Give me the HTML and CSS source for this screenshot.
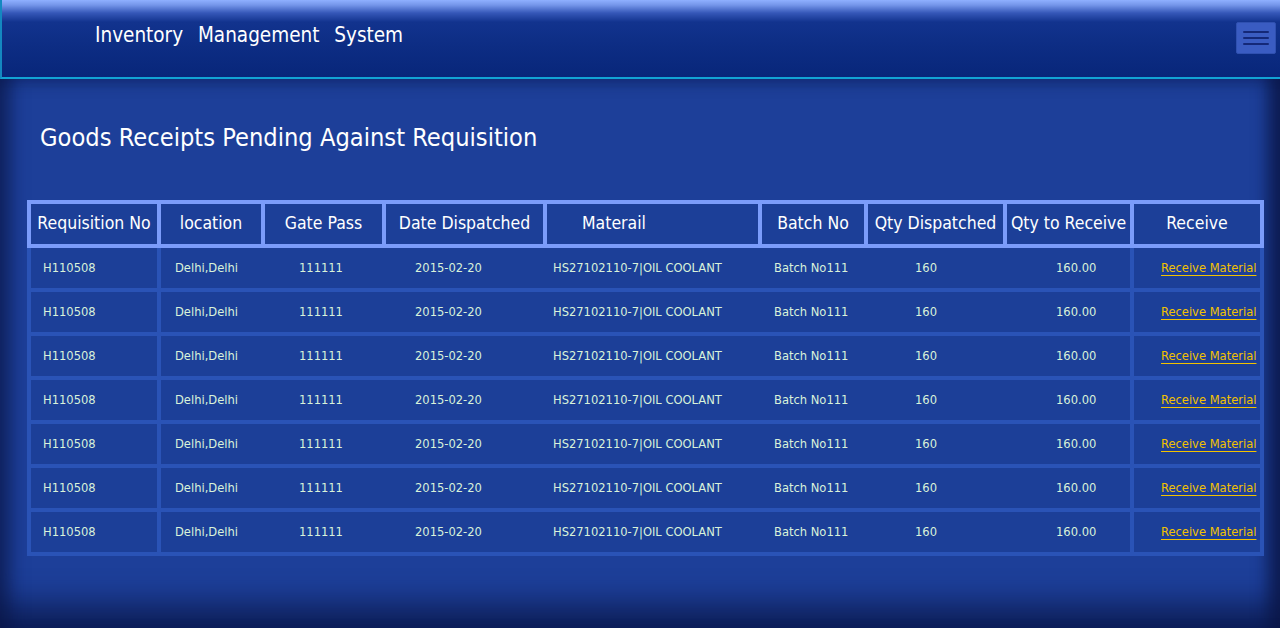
FILE: index.html
```html
<!DOCTYPE html>
<html lang="en">
<head>
<meta charset="utf-8">
<title>Inventory Management System</title>
<link rel="stylesheet" href="styles.css">
</head>
<body>
<header class="topbar">
  <div class="brand">Inventory Management System</div>
  <button class="menu-btn" type="button" aria-label="Menu"><span></span><span></span><span></span></button>
</header>
<main class="content">
  <h1 class="page-title">Goods Receipts Pending Against Requisition</h1>
  <table class="grid">
    <colgroup>
      <col class="w1"><col class="w2"><col class="w3"><col class="w4"><col class="w5"><col class="w6"><col class="w7"><col class="w8"><col class="w9">
    </colgroup>
    <thead>
      <tr>
        <th class="first">Requisition No</th>
        <th>location</th>
        <th>Gate Pass</th>
        <th>Date Dispatched</th>
        <th class="mat">Materail</th>
        <th>Batch No</th>
        <th>Qty Dispatched</th>
        <th>Qty to Receive</th>
        <th>Receive</th>
      </tr>
    </thead>
    <tbody>
      <tr><td class="c1">H110508</td><td class="c2">Delhi,Delhi</td><td class="c3">111111</td><td class="c4">2015-02-20</td><td class="c5">HS27102110-7|OIL COOLANT</td><td class="c6">Batch No111</td><td class="c7">160</td><td class="c8">160.00</td><td class="c9"><a href="#">Receive Material</a></td></tr>
      <tr><td class="c1">H110508</td><td class="c2">Delhi,Delhi</td><td class="c3">111111</td><td class="c4">2015-02-20</td><td class="c5">HS27102110-7|OIL COOLANT</td><td class="c6">Batch No111</td><td class="c7">160</td><td class="c8">160.00</td><td class="c9"><a href="#">Receive Material</a></td></tr>
      <tr><td class="c1">H110508</td><td class="c2">Delhi,Delhi</td><td class="c3">111111</td><td class="c4">2015-02-20</td><td class="c5">HS27102110-7|OIL COOLANT</td><td class="c6">Batch No111</td><td class="c7">160</td><td class="c8">160.00</td><td class="c9"><a href="#">Receive Material</a></td></tr>
      <tr><td class="c1">H110508</td><td class="c2">Delhi,Delhi</td><td class="c3">111111</td><td class="c4">2015-02-20</td><td class="c5">HS27102110-7|OIL COOLANT</td><td class="c6">Batch No111</td><td class="c7">160</td><td class="c8">160.00</td><td class="c9"><a href="#">Receive Material</a></td></tr>
      <tr><td class="c1">H110508</td><td class="c2">Delhi,Delhi</td><td class="c3">111111</td><td class="c4">2015-02-20</td><td class="c5">HS27102110-7|OIL COOLANT</td><td class="c6">Batch No111</td><td class="c7">160</td><td class="c8">160.00</td><td class="c9"><a href="#">Receive Material</a></td></tr>
      <tr><td class="c1">H110508</td><td class="c2">Delhi,Delhi</td><td class="c3">111111</td><td class="c4">2015-02-20</td><td class="c5">HS27102110-7|OIL COOLANT</td><td class="c6">Batch No111</td><td class="c7">160</td><td class="c8">160.00</td><td class="c9"><a href="#">Receive Material</a></td></tr>
      <tr><td class="c1">H110508</td><td class="c2">Delhi,Delhi</td><td class="c3">111111</td><td class="c4">2015-02-20</td><td class="c5">HS27102110-7|OIL COOLANT</td><td class="c6">Batch No111</td><td class="c7">160</td><td class="c8">160.00</td><td class="c9"><a href="#">Receive Material</a></td></tr>
    </tbody>
  </table>
</main>
</body>
</html>
```

FILE: styles.css
```css
html, body {
  margin: 0;
  height: 100%;
}

body {
  font-family: "DejaVu Sans", Verdana, sans-serif;
  font-stretch: condensed;
  background: #1d3f99;
  overflow: hidden;
}

.topbar {
  height: 77px;
  border-bottom: 2px solid #12a3d4;
  border-left: 2px solid #1488c0;
  background: linear-gradient(to bottom, #8fb0ff 0px, #7596ea 5px, #3557b8 13px, #12338e 22px, #0d2d84 45px, #08267a 77px);
  display: flex;
  justify-content: space-between;
  align-items: flex-start;
}

.brand {
  margin: 22px 0 0 93px;
  color: #ffffff;
  font-size: 20.5px;
  line-height: 26px;
  word-spacing: 9px;
}

.menu-btn {
  margin: 22px 4px 0 0;
  width: 40px;
  height: 32px;
  padding: 0;
  background: #3a5cc2;
  border: 1px solid #2f50b0;
  border-radius: 2px;
  display: flex;
  flex-direction: column;
  justify-content: center;
  align-items: center;
  gap: 4px;
}

.menu-btn span {
  display: block;
  width: 26px;
  height: 2px;
  background: #142878;
  border-radius: 1px;
}

.content {
  height: calc(100% - 79px);
  box-sizing: border-box;
  padding: 44px 0 0 27px;
  box-shadow:
    inset 22px 0 18px -12px rgba(10, 22, 70, 0.7),
    inset -22px 0 16px -10px rgba(10, 22, 70, 0.85),
    inset 0 -44px 30px -20px rgba(10, 22, 70, 0.75),
    inset 0 16px 14px -10px rgba(10, 22, 70, 0.3);
}

.page-title {
  margin: 0 0 47px 13px;
  color: #ffffff;
  font-weight: normal;
  font-size: 25.2px;
  line-height: 30px;
}

.grid {
  width: 1237px;
  table-layout: fixed;
  border-collapse: separate;
  border-spacing: 0;
}

.w1 { width: 134px; }
.w2 { width: 104px; }
.w3 { width: 121px; }
.w4 { width: 161px; }
.w5 { width: 215px; }
.w6 { width: 106px; }
.w7 { width: 139px; }
.w8 { width: 127px; }
.w9 { width: 130px; }

.grid th {
  box-sizing: border-box;
  height: 48px;
  padding: 0 0 2px 0;
  background: #1c3f98;
  color: #ffffff;
  font-weight: normal;
  font-size: 17.5px;
  text-align: center;
  white-space: nowrap;
  overflow: hidden;
  border-top: 4px solid #7b9cfa;
  border-bottom: 4px solid #7b9cfa;
  border-right: 4px solid #7b9cfa;
}

.grid th.first {
  border-left: 4px solid #7b9cfa;
}

.grid th.mat {
  text-align: left;
  padding-left: 35px;
}

.grid td {
  box-sizing: border-box;
  height: 44px;
  padding: 0 0 2px 0;
  background: #1c3f98;
  color: #d9f2da;
  font-size: 12.8px;
  white-space: nowrap;
  overflow: hidden;
  border-bottom: 4px solid #2a53b6;
}

.grid td.c1 { border-left: 4px solid #2a53b6; border-right: 4px solid #2a53b6; padding-left: 12px; }
.grid td.c2 { padding-left: 14px; }
.grid td.c3 { padding-left: 34px; }
.grid td.c4 { padding-left: 29px; }
.grid td.c5 { padding-left: 6px; }
.grid td.c6 { padding-left: 12px; }
.grid td.c7 { padding-left: 47px; }
.grid td.c8 { padding-left: 49px; border-right: 4px solid #2a53b6; }
.grid td.c9 { padding-left: 27px; border-right: 4px solid #2a53b6; }

.grid td a {
  color: #f2c200;
  text-decoration: underline;
  text-underline-offset: 3px;
}
```
